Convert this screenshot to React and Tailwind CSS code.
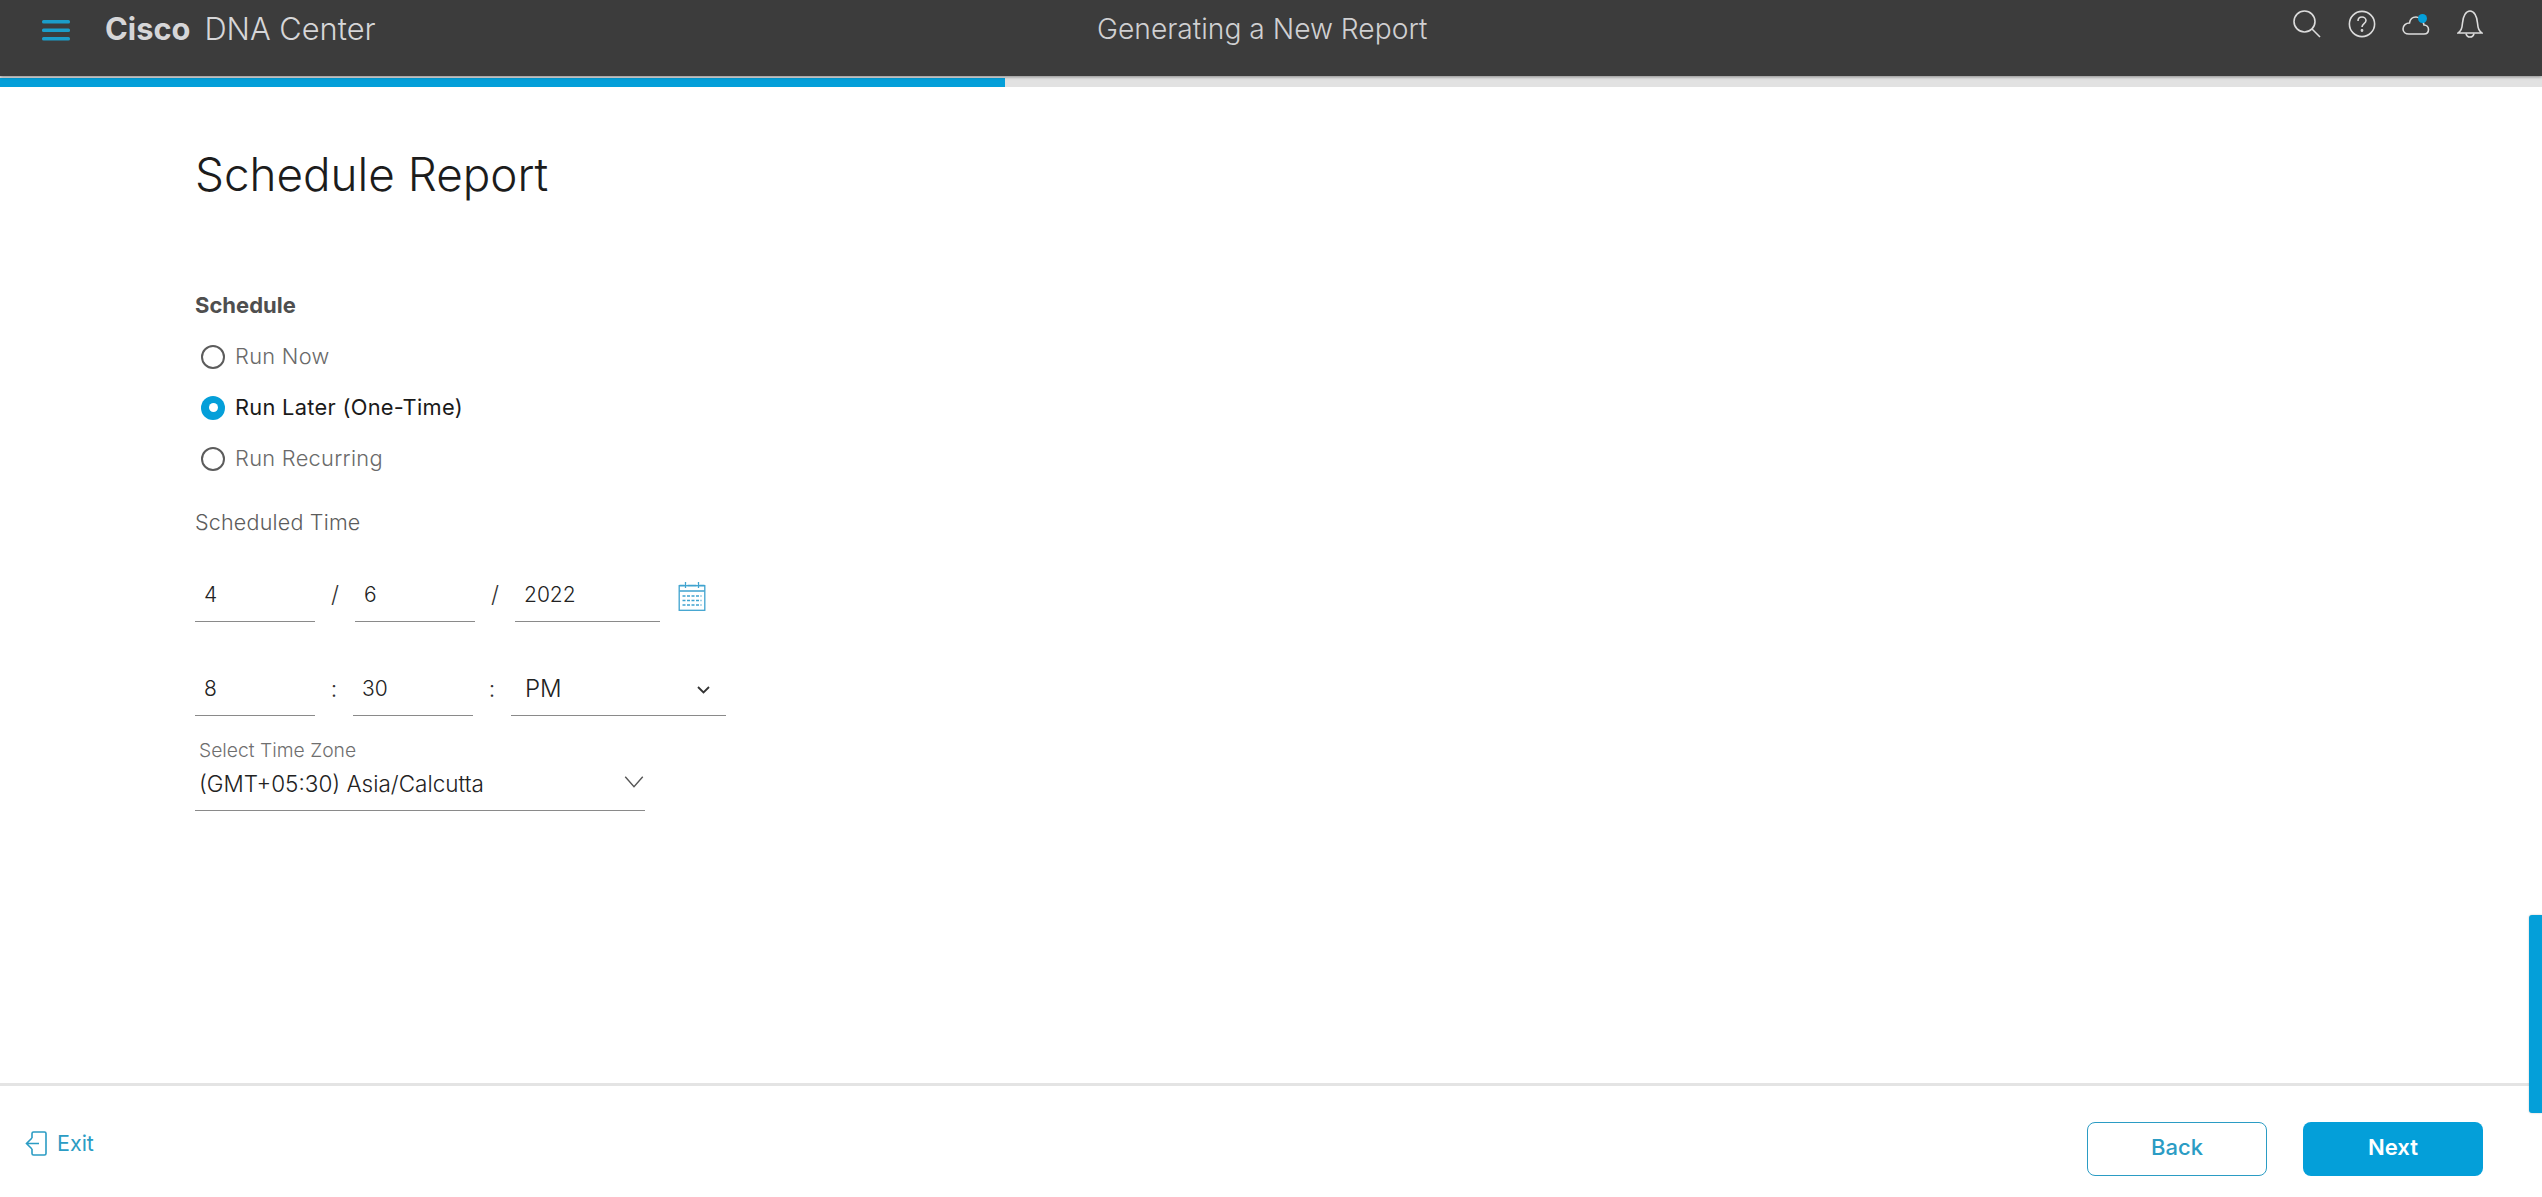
import React from "react";

const font = "font-['Inter','Liberation_Sans',sans-serif]";

function Radio({ label, checked }) {
  return (
    <div className="flex items-center h-[51px] pl-[2px]">
      {checked ? (
        <span className="w-6 h-6 ml-[5px] rounded-full bg-[#049fd9] flex items-center justify-center">
          <span className="w-[9px] h-[9px] rounded-full bg-white" />
        </span>
      ) : (
        <span className="w-6 h-6 ml-[5px] rounded-full border-2 border-[#5c5c5c] bg-white" />
      )}
      <span className={`ml-[10px] text-[21.8px] tracking-[0.3px] ${checked ? "text-[#1a1a1a]" : "text-[#6a6a6a] font-light"}`}>
        {label}
      </span>
    </div>
  );
}

function Field({ value, w }) {
  return (
    <div className="h-[54px] shrink-0 border-b border-[#8a8a8a] flex items-center pl-[9px] font-light text-[#222] text-[21px]" style={{ width: w }}>
      {value}
    </div>
  );
}

function Sep({ c, w }) {
  return <span className="shrink-0 text-[23px] text-[#333] font-light text-center" style={{ width: w }}>{c}</span>;
}

export default function App() {
  return (
    <div className={`relative w-[2542px] h-[1197px] bg-white overflow-hidden flex flex-col ${font}`}>
      <header className="relative h-[76px] bg-[#3c3c3c] flex items-start shrink-0 z-10 shadow-[0_1px_3px_rgba(0,0,0,0.4)]">
        <svg className="ml-[42px] mt-[20px]" width="28" height="21" viewBox="0 0 28 21">
          <g fill="#1b9dc9">
            <rect width="28" height="3.4" rx="1.5" />
            <rect y="8.5" width="28" height="3.4" rx="1.5" />
            <rect y="17" width="28" height="3.4" rx="1.5" />
          </g>
        </svg>
        <div className="ml-[35px] mt-[10px] text-[30.8px] leading-[38px] text-[#d6d6d8] font-light whitespace-nowrap">
          <span className="font-bold">Cisco</span>
          <span className="ml-[14px]">DNA Center</span>
        </div>
        <div className="absolute left-[1097px] top-[10px] text-[28.2px] leading-[38px] text-[#d0d0d2] font-light whitespace-nowrap">
          Generating a New Report
        </div>
        <div className="absolute left-[2293px] top-[10px] flex items-start gap-[26px] text-[#dcdcdc]">
          <svg width="28" height="28" viewBox="0 0 28 28" fill="none" stroke="currentColor" strokeWidth="1.6">
            <circle cx="11.5" cy="11.5" r="10.5" />
            <path d="M19 19l8 8" />
          </svg>
          <svg className="ml-[1px]" width="28" height="28" viewBox="0 0 28 28" fill="none" stroke="currentColor" strokeWidth="1.6">
            <circle cx="14" cy="14" r="12.6" />
            <path d="M10 11c0-2.600 1.800-4 4-4s4 1.500 4 3.600c0 3-4 3.200-4 6.400" />
            <circle cx="14" cy="20.500" r="0.6" />
          </svg>
          <svg width="28" height="28" viewBox="0 0 28 28" fill="none" stroke="currentColor" strokeWidth="1.6" className="relative">
            <path d="M7 24h15c3 0 4.500-2 4.500-4.500 0-2.500-2-4.500-4.500-4.500-.5-4-4-8-8-8-3.500 0-6 2.500-6.500 6C4 13 1 15.500 1 19c0 3 2.500 5 6 5z" />
            <circle cx="20.500" cy="8.500" r="4.500" fill="#049fd9" stroke="none" />
          </svg>
          <svg className="ml-[1px]" width="26" height="28" viewBox="0 0 26 28" fill="none" stroke="currentColor" strokeWidth="1.6">
            <path d="M1 23c3-2.500 4-4 4.500-10C6 6 9 1 13 1s7 5 7.500 12c.5 6 1.500 7.500 4.500 10z" />
            <path d="M9 23.500c.5 2.500 2 3.500 4 3.500s3.500-1 4-3.500" />
          </svg>
        </div>
      </header>

      <div className="h-[11px] bg-[#e2e2e2] shrink-0 pt-[2px]">
        <div className="h-[9px] w-[1005px] bg-[#049fd9]" />
      </div>

      <main className="flex-1 pl-[195px]">
        <h1 className="mt-[60px] text-[45.8px] leading-[56px] font-light text-[#1c1c1c]">Schedule Report</h1>
        <div className="mt-[88px] text-[22px] leading-[28px] font-bold text-[#4f4f4f]">Schedule</div>
        <div className="mt-[12px] -ml-[1px]">
          <Radio label="Run Now" />
          <Radio label="Run Later (One-Time)" checked />
          <Radio label="Run Recurring" />
        </div>
        <div className="mt-[24px] text-[21.5px] leading-[28px] font-light text-[#5c5c5c] tracking-[0.2px]">Scheduled Time</div>

        <div className="mt-[32px] flex items-center">
          <Field value="4" w={120} />
          <Sep c="/" w={40} />
          <Field value="6" w={120} />
          <Sep c="/" w={40} />
          <Field value="2022" w={145} />
          <svg className="ml-[17px] mt-[2px] shrink-0" width="30" height="30" viewBox="0 0 27 30" fill="none" stroke="#3fa3cf" strokeWidth="1.300">
            <rect x="0.700" y="4.700" width="25.600" height="24.600" />
            <path d="M1 10h25M7 1v6M20 1v6M1 4.500h5M9 4.500h9M21 4.500h5" />
            <path d="M4 15h19M4 19.500h19M4 24h19" strokeDasharray="3 1.500" />
          </svg>
        </div>

        <div className="mt-[40px] flex items-center">
          <Field value="8" w={120} />
          <Sep c=":" w={38} />
          <Field value="30" w={120} />
          <Sep c=":" w={38} />
          <div className="relative shrink-0 w-[215px] h-[54px] border-b border-[#8a8a8a] flex items-center pl-[14px] text-[24px] font-light text-[#222]">
            PM
            <svg className="absolute right-[15px] top-[23px]" width="15" height="10" viewBox="0 0 14 10" fill="none" stroke="#333" strokeWidth="1.800">
              <path d="M1.500 2l5.500 5.500 5.500-5.500" />
            </svg>
          </div>
        </div>

        <div className="mt-[22px] relative w-[450px] border-b border-[#8a8a8a] h-[73px]">
          <div className="pl-[4px] text-[19.300px] leading-[24px] font-light text-[#6f6f6f]">Select Time Zone</div>
          <div className="pl-[4px] mt-[8px] text-[22.500px] leading-[28px] font-light text-[#222]">(GMT+05:30) Asia/Calcutta</div>
          <svg className="absolute right-[1px] top-[37px]" width="20" height="14" viewBox="0 0 17 12" fill="none" stroke="#555" strokeWidth="1.200">
            <path d="M1 1.500l7.500 8.500 7.500-8.500" />
          </svg>
        </div>
      </main>

      <div className="absolute right-0 top-[915px] w-[13px] h-[198px] bg-[#049fd9] rounded-l-[3px] shadow-[0_0_2px_rgba(0,0,0,0.25)]" />

      <footer className="h-[114px] shrink-0 border-t-[3px] border-[#e4e4e4] flex items-start pl-[25px] pr-[59px]">
        <div className="mt-[44px] flex items-center text-[#2b9cc4] text-[21.500px] leading-[26px]">
          <svg width="22" height="25" viewBox="0 0 22 25" fill="none" stroke="#2b9cc4" strokeWidth="1.600">
            <path d="M7 7V2.500C7 1.500 7.500 1 8.500 1h11c1 0 1.500.5 1.500 1.500v20c0 1-.5 1.500-1.500 1.500h-11C7.500 24 7 23.500 7 22.500V18" />
            <path d="M14 12.500H1.500M7 7l-5.500 5.500L7 18" />
          </svg>
          <span className="ml-[10px]">Exit</span>
        </div>
        <div className="ml-auto mt-[36px] flex gap-[36px]">
          <button className="w-[180px] h-[54px] pb-[3px] rounded-[8px] border border-[#2b9cc4] bg-white text-[#2b9cc4] text-[22px] font-medium">Back</button>
          <button className="w-[180px] h-[54px] pb-[3px] rounded-[8px] bg-[#049fd9] text-white text-[22px] font-semibold">Next</button>
        </div>
      </footer>
    </div>
  );
}
